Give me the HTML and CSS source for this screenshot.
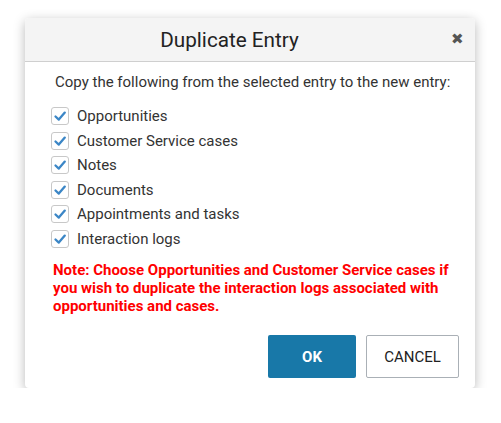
FILE: index.html
```html
<!DOCTYPE html>
<html>
<head>
<meta charset="utf-8">
<link rel="stylesheet" href="styles.css">
</head>
<body>
<div class="dialog">
  <div class="header">
    <div class="title">Duplicate Entry</div>
    <span class="close">&#x2716;</span>
  </div>
  <div class="body">
    <p class="intro">Copy the following from the selected entry to the new entry:</p>
    <ul class="list">
      <li><span class="box"><svg viewBox="0 0 18 18" width="18" height="18"><path d="M4.5 9.5 L7.8 12.6 L13.8 5.6" fill="none" stroke="#3b86c6" stroke-width="2.3" stroke-linecap="round" stroke-linejoin="round"/></svg></span>Opportunities</li>
      <li><span class="box"><svg viewBox="0 0 18 18" width="18" height="18"><path d="M4.5 9.5 L7.8 12.6 L13.8 5.6" fill="none" stroke="#3b86c6" stroke-width="2.3" stroke-linecap="round" stroke-linejoin="round"/></svg></span>Customer Service cases</li>
      <li><span class="box"><svg viewBox="0 0 18 18" width="18" height="18"><path d="M4.5 9.5 L7.8 12.6 L13.8 5.6" fill="none" stroke="#3b86c6" stroke-width="2.3" stroke-linecap="round" stroke-linejoin="round"/></svg></span>Notes</li>
      <li><span class="box"><svg viewBox="0 0 18 18" width="18" height="18"><path d="M4.5 9.5 L7.8 12.6 L13.8 5.6" fill="none" stroke="#3b86c6" stroke-width="2.3" stroke-linecap="round" stroke-linejoin="round"/></svg></span>Documents</li>
      <li><span class="box"><svg viewBox="0 0 18 18" width="18" height="18"><path d="M4.5 9.5 L7.8 12.6 L13.8 5.6" fill="none" stroke="#3b86c6" stroke-width="2.3" stroke-linecap="round" stroke-linejoin="round"/></svg></span>Appointments and tasks</li>
      <li><span class="box"><svg viewBox="0 0 18 18" width="18" height="18"><path d="M4.5 9.5 L7.8 12.6 L13.8 5.6" fill="none" stroke="#3b86c6" stroke-width="2.3" stroke-linecap="round" stroke-linejoin="round"/></svg></span>Interaction logs</li>
    </ul>
    <p class="note">Note: Choose Opportunities and Customer Service cases if you wish to duplicate the interaction logs associated with opportunities and cases.</p>
    <div class="actions">
      <button class="btn ok">OK</button>
      <button class="btn cancel">CANCEL</button>
    </div>
  </div>
</div>
</body>
</html>
```
FILE: styles.css
```css
html, body {
  margin: 0;
  padding: 0;
  background: #fff;
  font-family: Roboto, "Liberation Sans", sans-serif;
}
.dialog {
  margin: 18px 0 0 25px;
  width: 450px;
  height: 370px;
  box-sizing: border-box;
  background: #fff;
  border-radius: 4px;
  box-shadow: 0 3px 12px rgba(0,0,0,0.28);
  overflow: hidden;
  display: flex;
  flex-direction: column;
}
.header {
  position: relative;
  height: 43px;
  padding-right: 41px;
  background: #f4f4f4;
  border-bottom: 1px solid #cfcfcf;
  display: flex;
  align-items: center;
  justify-content: center;
}
.title {
  font-size: 20.7px;
  color: #222;
  padding-top: 1px;
}
.close {
  position: absolute;
  right: 11px;
  top: 13px;
  font-size: 15px;
  color: #555;
  line-height: 16px;
}
.body {
  flex: 1;
  display: flex;
  flex-direction: column;
  padding: 0 15px 10px 26px;
}
.intro {
  margin: 10px 0 0 4px;
  font-size: 15px;
  line-height: 20px;
  color: #333;
}
.list {
  list-style: none;
  margin: 12px 0 0 0;
  padding: 0;
}
.list li {
  display: flex;
  align-items: center;
  height: 24.5px;
  font-size: 15px;
  color: #333;
}
.box {
  width: 18px;
  height: 18px;
  box-sizing: border-box;
  border: 1px solid #c8c8c8;
  border-radius: 3px;
  margin-right: 8px;
  display: flex;
  align-items: center;
  justify-content: center;
  background: #fff;
}
.box svg {
  display: block;
  flex: none;
}
.note {
  margin: 10px 0 0 2px;
  font-size: 15px;
  font-weight: bold;
  line-height: 18px;
  color: #f00;
}
.actions {
  margin-top: auto;
  display: flex;
  justify-content: flex-end;
  gap: 10px;
}
.btn {
  height: 43px;
  font-family: Roboto, "Liberation Sans", sans-serif;
  font-size: 15px;
  border-radius: 2px;
  cursor: pointer;
}
.ok {
  width: 88px;
  background: #1878a8;
  color: #fff;
  font-weight: bold;
  border: none;
}
.cancel {
  width: 93px;
  margin-right: 1px;
  background: #fff;
  color: #222;
  border: 1px solid #aab0b6;
}
```
